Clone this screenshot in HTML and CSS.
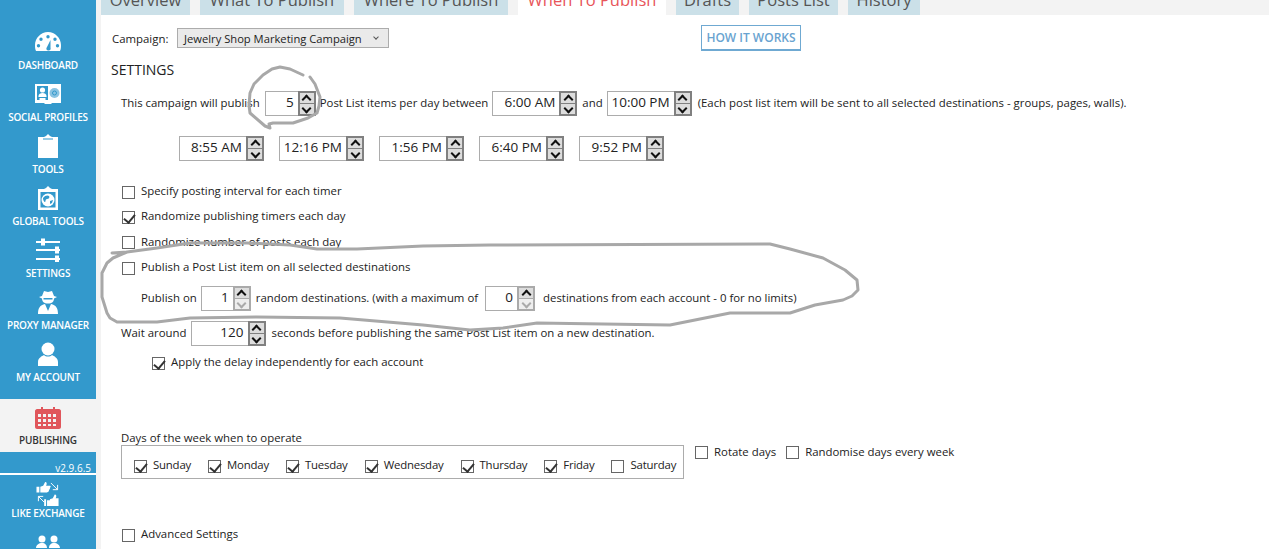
FILE: index.html
```html
<!DOCTYPE html>
<html lang="en">
<head>
    <meta charset="UTF-8">
    <meta name="viewport" content="width=device-width, initial-scale=1.0">
    <title>When To Publish</title>
    <link rel="stylesheet" href="styles.css">
</head>
<body>
    <nav class="sidebar">
        <a class="nav-item">
            <svg class="nav-icon" viewBox="0 0 26 20"><path fill="#fff" fill-rule="evenodd" d="M1 19C0 17 0 15 0 13 0 6 6 0 13 0s13 6 13 13c0 2 0 4-1 6zM13 3a1.7 1.7 0 1 0 0 3.400A1.700 1.700 0 0 0 13 3zM6 5.500a1.700 1.700 0 1 0 0 3.400 1.700 1.700 0 0 0 0-3.400zM20 5.500a1.700 1.700 0 1 0 0 3.400 1.700 1.700 0 0 0 0-3.400zM3.500 12a1.700 1.700 0 1 0 0 3.400 1.700 1.700 0 0 0 0-3.400zM22.500 12a1.700 1.700 0 1 0 0 3.400 1.700 1.700 0 0 0 0-3.400zM15.500 8l-3.500 7c-1 1-1 3 1 3.500s3-1 2.500-3z"/></svg>
            <span>DASHBOARD</span>
        </a>
        <a class="nav-item">
            <svg class="nav-icon" viewBox="0 0 26 20"><path fill="#fff" d="M0 0h26v19H17l-1 1h-6l-1-1H0z"/><path fill="#3399cc" d="M2 2h11v14h-2.500v-2h-6v2H2z"/><circle cx="7.500" cy="6" r="2.600" fill="#fff"/><path fill="#fff" d="M3.500 12c0-2 2-3 4-3s4 1 4 3v1h-8z"/><circle cx="19.500" cy="9" r="5" fill="#8cc4e2"/><circle cx="19.500" cy="9" r="2" fill="none" stroke="#3399cc"/></svg>
            <span>SOCIAL PROFILES</span>
        </a>
        <a class="nav-item">
            <svg class="nav-icon" viewBox="0 0 26 24"><path fill="#fff" d="M3 3h6l2-1 2-2 2 2 2 1h6v21H3z"/><path fill="none" stroke="#3399cc" d="M8 5h10"/></svg>
            <span>TOOLS</span>
        </a>
        <a class="nav-item">
            <svg class="nav-icon" viewBox="0 0 26 24"><path fill="#fff" d="M3 3h6l2-1 2-2 2 2 2 1h6v21H3z"/><path fill="#3399cc" d="M5.500 6h15v15.500h-15z"/><circle cx="13" cy="14" r="6.500" fill="#fff"/><path fill="#3399cc" d="M8 12c2-3 5-3 6-2s0 3-2 3-1 3-2 3-2-2-2-4zM15 15l3-1-1 3-2 1z"/></svg>
            <span>GLOBAL TOOLS</span>
        </a>
        <a class="nav-item">
            <svg class="nav-icon" viewBox="0 0 26 24"><path fill="#fff" d="M1 3h5V.500h4V3h15v2H10v2.500H6V5H1zM1 11h19V8.500h4V11h1v2h-1v2.500h-4V13H1zM1 20h19v-2.500h4V20h1v2h-1v2.500h-4V22H1z"/></svg>
            <span>SETTINGS</span>
        </a>
        <a class="nav-item">
            <svg class="nav-icon" viewBox="0 0 26 24"><path fill="#fff" d="M7 6l2-5 4 1 4-1 2 5 3 1-3 1.500c0 3-2 5-6 5s-6-2-6-5L4 7zM3 24c0-6 2-9 7-10l3 7 3-7c5 1 7 4 7 10z"/><path fill="#3399cc" d="M8.500 8h9v1.500h-9z"/></svg>
            <span>PROXY MANAGER</span>
        </a>
        <a class="nav-item">
            <svg class="nav-icon" viewBox="0 0 26 24"><circle cx="13" cy="7" r="6.500" fill="#fff"/><path fill="#fff" d="M3 24v-4c0-4 4-6 6-7 2 2 6 2 8 0 2 1 6 3 6 7v4z"/></svg>
            <span>MY ACCOUNT</span>
        </a>
        <a class="nav-item nav-active">
            <svg class="nav-icon" viewBox="0 0 26 22"><path fill="#e0565b" fill-rule="evenodd" d="M2 2h4V0h2v2h10V0h2v2h4c1 0 2 1 2 2v16c0 1-1 2-2 2H2c-1 0-2-1-2-2V4c0-1 1-2 2-2zM3 7v3h3V7zm5 0v3h3V7zm5 0v3h3V7zm5 0v3h3V7zM3 12v3h3v-3zm5 0v3h3v-3zm5 0v3h3v-3zm5 0v3h3v-3zM3 17v2h3v-2zm5 0v2h3v-2zm5 0v2h3v-2zm5 0v2h3v-2z"/></svg>
            <span>PUBLISHING</span>
        </a>
        <div class="version">v2.9.6.5</div>
        <a class="nav-item nav-exchange">
            <svg class="nav-icon" viewBox="0 0 26 25"><path fill="#fff" d="M1 5h3v6H1zM5 5l3-1 2-4c2 0 2 2 1 4h4c1 0 1 2 0 2v1c0 1-1 1-1 1v1c0 1-2 2-3 2H5zM12 19h3v-1l3-1 2-4c2 0 2 2 1 4h3v8H12zM9 18h2v7H9z"/><path fill="none" stroke="#fff" d="M16 1l7 7M23 3v5h-5M3 15l6 6M3 20v-5h5"/></svg>
            <span>LIKE EXCHANGE</span>
        </a>
        <a class="nav-item">
            <svg class="nav-icon" viewBox="0 0 26 24"><circle cx="7" cy="4" r="3.500" fill="#fff"/><circle cx="19" cy="4" r="3.500" fill="#fff"/><path fill="#fff" d="M1 13c0-3 3-5 6-5s5 2 5 5zM14 13c0-3 2-5 5-5s6 2 6 5z"/></svg>
        </a>
    </nav>

    <main class="content">
        <div class="tabs">
            <a class="tab tab-overview">Overview</a>
            <a class="tab tab-what">What To Publish</a>
            <a class="tab tab-where">Where To Publish</a>
            <a class="tab tab-when active">When To Publish</a>
            <a class="tab tab-drafts">Drafts</a>
            <a class="tab tab-posts">Posts List</a>
            <a class="tab tab-history">History</a>
        </div>

        <div class="campaign-row">
            <label class="campaign-label">Campaign:</label>
            <div class="select">
                <span>Jewelry Shop Marketing Campaign</span>
                <i class="select-caret"></i>
            </div>
            <button class="how-btn">HOW IT WORKS</button>
        </div>

        <h2 class="settings-title">SETTINGS</h2>

        <div class="row row-publish">
            <span>This campaign will publish</span>
            <div class="spin spin-count"><span class="spin-value">5</span><div class="spin-btns"><b class="up"></b><b class="down"></b></div></div>
            <span class="pull-both">Post List items per day between</span>
            <div class="spin spin-time"><span class="spin-value">6:00 AM</span><div class="spin-btns"><b class="up"></b><b class="down"></b></div></div>
            <span class="pull-right">and</span>
            <div class="spin spin-time"><span class="spin-value">10:00 PM</span><div class="spin-btns"><b class="up"></b><b class="down"></b></div></div>
            <span class="gap-wide">(Each post list item will be sent to all selected destinations - groups, pages, walls).</span>
        </div>

        <div class="row row-timers">
            <div class="spin spin-timer"><span class="spin-value">8:55 AM</span><div class="spin-btns"><b class="up"></b><b class="down"></b></div></div>
            <div class="spin spin-timer"><span class="spin-value">12:16 PM</span><div class="spin-btns"><b class="up"></b><b class="down"></b></div></div>
            <div class="spin spin-timer"><span class="spin-value">1:56 PM</span><div class="spin-btns"><b class="up"></b><b class="down"></b></div></div>
            <div class="spin spin-timer"><span class="spin-value">6:40 PM</span><div class="spin-btns"><b class="up"></b><b class="down"></b></div></div>
            <div class="spin spin-timer"><span class="spin-value">9:52 PM</span><div class="spin-btns"><b class="up"></b><b class="down"></b></div></div>
        </div>

        <div class="check-list">
            <label class="check"><i class="box"></i>Specify posting interval for each timer</label>
            <label class="check"><i class="box on"></i>Randomize publishing timers each day</label>
            <label class="check"><i class="box"></i>Randomize number of posts each day</label>
            <label class="check"><i class="box"></i>Publish a Post List item on all selected destinations</label>
        </div>

        <div class="row row-random">
            <span class="pull-right">Publish on</span>
            <div class="spin spin-small"><span class="spin-value">1</span><div class="spin-btns"><b class="up"></b><b class="down off"></b></div></div>
            <span>random destinations. (with a maximum of</span>
            <div class="spin spin-small spin-max"><span class="spin-value">0</span><div class="spin-btns"><b class="up"></b><b class="down off"></b></div></div>
            <span>destinations from each account - 0 for no limits)</span>
        </div>

        <div class="row row-wait">
            <span class="pull-right">Wait around</span>
            <div class="spin spin-wait"><span class="spin-value">120</span><div class="spin-btns"><b class="up"></b><b class="down"></b></div></div>
            <span class="gap-wide">seconds before publishing the same Post List item on a new destination.</span>
        </div>

        <label class="check check-apply"><i class="box on"></i>Apply the delay independently for each account</label>

        <div class="days-label">Days of the week when to operate</div>
        <div class="days-row">
            <div class="days-box">
                <label class="check"><i class="box on"></i>Sunday</label>
                <label class="check"><i class="box on"></i>Monday</label>
                <label class="check"><i class="box on"></i>Tuesday</label>
                <label class="check"><i class="box on"></i>Wednesday</label>
                <label class="check"><i class="box on"></i>Thursday</label>
                <label class="check"><i class="box on"></i>Friday</label>
                <label class="check"><i class="box"></i>Saturday</label>
            </div>
            <label class="check check-top"><i class="box"></i>Rotate days</label>
            <label class="check check-top"><i class="box"></i>Randomise days every week</label>
        </div>

        <label class="check check-advanced"><i class="box"></i>Advanced Settings</label>
    </main>

    <!-- pen marks drawn over the screenshot -->
    <svg class="scribble" viewBox="0 0 1269 549">
        <path d="M310 77L315 84 320 97 319 106 317 113 308 118 293 123 273 123 269 124 270 128 265 126 250 113 249 105 250 93 254 84 263 75 272 69 280 67 290 69 303 75"/>
        <path d="M112 253L127 252 157 248 190 243 247 243 290 245 317 249 357 249 423 246 490 245 770 244 790 249 823 258 845 270 857 280 858 290 852 296 843 300 815 305 790 313 730 313 700 319 670 325 537 323 503 328 470 330 423 325 340 318 257 317 190 318 157 322 117 322 110 318 107 313 102 297 102 273 107 263 113 258 127 252"/>
    </svg>
</body>
</html>
```

FILE: styles.css
```css
* {
    box-sizing: border-box;
}

html, body {
    height: 549px;
    margin: 0;
    overflow: hidden;
}

body {
    display: flex;
    position: relative;
    background: #fff;
    color: #222;
    font-family: "Open Sans", sans-serif;
    font-size: 11.4px;
}

/* Left menu */
.sidebar {
    width: 96px;
    height: 549px;
    flex: none;
    padding-top: 30px;
    background: #3399cc;
    overflow: hidden;
}

.nav-item {
    display: flex;
    flex-direction: column;
    align-items: center;
    height: 52px;
    color: #fff;
    font-size: 10px;
    font-weight: 600;
    letter-spacing: -.2px;
    white-space: nowrap;
}

.nav-icon {
    width: 26px;
    height: 24px;
    margin-bottom: 4px;
}

.nav-active {
    height: 53px;
    margin-top: 5px;
    padding-top: 7px;
    background: #f3f3f3;
    color: #333;
}

.nav-active .nav-icon {
    margin-bottom: 3px;
}

.version {
    height: 23px;
    padding: 9px 5px 0 0;
    border-bottom: 2px solid #fff;
    color: #fff;
    font-size: 10px;
    text-align: right;
}

.nav-exchange {
    height: 53px;
    margin-top: 7px;
}

.nav-exchange .nav-icon {
    margin-bottom: 0;
}

/* Main area */
.content {
    flex: 1;
    min-width: 0;
    border-left: 5px solid #f3f3f3;
}

.tabs {
    display: flex;
    gap: 10px;
    height: 15px;
    background: #f3f3f3;
    overflow: hidden;
}

.tab {
    display: flex;
    justify-content: center;
    align-items: flex-end;
    height: 15px;
    padding-bottom: 7px;
    background: #cbe0e8;
    color: #555;
    font-size: 16.5px;
    line-height: 16px;
    white-space: nowrap;
}

.tab.active {
    background: #fff;
    color: #e8555a;
}

.tab-overview { width: 89px; }
.tab-what { width: 144px; }
.tab-where { width: 154px; }
.tab-when { width: 148px; }
.tab-drafts { width: 63px; }
.tab-posts { width: 89px; }
.tab-history { width: 72px; }

.campaign-row {
    display: flex;
    align-items: center;
    height: 26px;
    margin-top: 10px;
    padding-left: 11px;
}

.campaign-label {
    width: 65px;
    flex: none;
}

.select {
    display: flex;
    justify-content: space-between;
    align-items: center;
    width: 212px;
    height: 20px;
    flex: none;
    padding: 0 6px;
    border: 1px solid #acacac;
    background: #eaeaea;
    font-size: 11.2px;
}

.select-caret {
    width: 4px;
    height: 4px;
    margin: -2px 4px 0 0;
    border-right: 1px solid #555;
    border-bottom: 1px solid #555;
    transform: rotate(45deg);
}

.how-btn {
    width: 100px;
    height: 26px;
    flex: none;
    margin-left: 312px;
    padding: 0;
    border: 1px solid #6fa9d2;
    border-bottom-width: 2px;
    background: #fff;
    color: #69a3d0;
    font-family: inherit;
    font-size: 12px;
    font-weight: 600;
}

.settings-title {
    height: 20px;
    margin: 9px 0 0;
    padding-left: 10px;
    font-size: 14px;
    font-weight: 400;
    line-height: 20px;
}

/* Rows with number boxes */
.row {
    display: flex;
    align-items: center;
    height: 25px;
    white-space: nowrap;
}

.row > span {
    margin-bottom: 2px;
}

.row-publish {
    margin-top: 11px;
    padding-left: 20px;
    gap: 5px;
}

.row > .pull-both {
    margin-left: -1px;
    margin-right: -1px;
}

.row > .pull-right {
    margin-right: -1px;
}

.row > .gap-wide {
    margin-left: 1px;
}

.row-timers {
    gap: 15px;
    margin-top: 20px;
    padding-left: 78px;
}

.row-random {
    gap: 5px;
    margin-top: 7px;
    padding-left: 40px;
}

.spin-max {
    margin: 0 3px 0 2px;
}

.row-wait {
    gap: 5px;
    margin-top: 10px;
    padding-left: 20px;
}

.spin {
    display: flex;
    height: 25px;
    flex: none;
    border: 1px solid #acacac;
    background: #fff;
    font-size: 13.5px;
}

.spin-value {
    flex: 1;
    padding-right: 4px;
    line-height: 21px;
    text-align: right;
}

.spin-btns {
    display: flex;
    flex-direction: column;
    width: 18px;
    margin: -1px -1px -1px 0;
    border: 2px solid #808080;
    background: #808080;
    gap: 1px;
}

.spin-btns b {
    display: flex;
    justify-content: center;
    align-items: center;
    flex: 1;
    background: #ddd;
}

.spin-btns b::before {
    content: "";
    width: 5px;
    height: 5px;
    border-top: 2px solid #111;
    border-left: 2px solid #111;
}

.up::before {
    margin-top: 2px;
    transform: rotate(45deg);
}

.down::before {
    margin-bottom: 2px;
    transform: rotate(225deg);
}

.spin-btns b.off {
    background: #eee;
}

.spin-btns b.off::before {
    border-color: #aaa;
}

.spin-small .spin-btns {
    background: #aaa;
    border-color: #aaa;
}

.spin-count { width: 51px; }
.spin-time { width: 85px; }
.spin-timer { width: 85px; }
.spin-small { width: 50px; }
.spin-wait { width: 75px; }

/* Check boxes */
.check {
    display: flex;
    align-items: center;
    gap: 6px;
    white-space: nowrap;
}

.box {
    position: relative;
    width: 13px;
    height: 13px;
    flex: none;
    margin-top: 3px;
    border: 1px solid #666;
    background: #fff;
}

.box.on::after {
    content: "";
    position: absolute;
    left: 3px;
    top: 0;
    width: 5px;
    height: 9px;
    border-right: 2px solid #333;
    border-bottom: 2px solid #333;
    transform: rotate(40deg);
}

.check-list {
    margin-top: 17px;
    padding-left: 21px;
}

.check-list .check {
    height: 25.33px;
}

.check-apply {
    height: 25px;
    margin-top: 3px;
    padding-left: 51px;
}

.days-label {
    height: 14px;
    margin-top: 57px;
    padding-left: 20px;
    line-height: 14px;
}

.days-row {
    display: flex;
    align-items: flex-start;
    padding-left: 20px;
}

.days-box {
    display: flex;
    align-items: center;
    gap: 17px;
    width: 563px;
    height: 34px;
    margin-right: 11px;
    padding: 5px 0 0 12px;
    border: 1px solid #acacac;
    letter-spacing: -.2px;
}

.check-top {
    height: 12px;
    margin-right: 10px;
}

.check-advanced {
    height: 25px;
    margin-top: 42px;
    padding-left: 21px;
}

/* Pen marks */
.scribble {
    position: absolute;
    left: 0;
    top: 0;
    width: 1269px;
    height: 549px;
    pointer-events: none;
}

.scribble path {
    fill: none;
    stroke: #a8a8a8;
    stroke-width: 3;
    stroke-linejoin: round;
    stroke-linecap: round;
}
```
